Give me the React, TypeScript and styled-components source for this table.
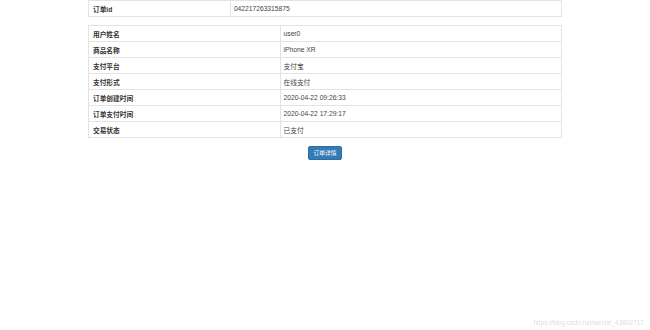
import React from 'react';
import styled, { createGlobalStyle } from 'styled-components';

const GlobalStyle = createGlobalStyle`
  html, body {
    margin: 0;
    padding: 0;
    background: #fff;
  }
  body {
    font-family: "Liberation Sans", Arial, "Noto Sans CJK SC", sans-serif;
    color: #333;
  }
`;

const Page = styled.div`
  width: 474px;
  margin: 0 auto;
  display: flex;
  flex-direction: column;
  align-items: center;
`;

const Table = styled.table<{ $gap?: number }>`
  width: 100%;
  border-collapse: collapse;
  margin-top: ${p => p.$gap ?? 0}px;
  font-size: 6.7px;
`;

const Label = styled.td<{ $width: string }>`
  width: ${p => p.$width};
  height: 15px;
  padding: 0 4px;
  border: 1px solid #e3e3e3;
  font-weight: bold;
  color: #333;
  vertical-align: middle;
`;

const Value = styled.td`
  height: 15px;
  padding: 0 3px;
  border: 1px solid #e3e3e3;
  color: #444;
  vertical-align: middle;
`;

const DetailButton = styled.button`
  margin-top: 8px;
  width: 34px;
  height: 14px;
  padding: 0;
  background: #337ab7;
  border: 1px solid #2e6da4;
  border-radius: 2px;
  color: #fff;
  font-family: inherit;
  font-size: 5.8px;
  line-height: 12px;
  cursor: pointer;
`;

const Watermark = styled.div`
  position: fixed;
  right: 6px;
  bottom: 4px;
  font-size: 6.5px;
  color: #dcdcdc;
`;

const order = [
  ['用户姓名', 'user0'],
  ['商品名称', 'iPhone XR'],
  ['支付平台', '支付宝'],
  ['支付形式', '在线支付'],
  ['订单创建时间', '2020-04-22 09:26:33'],
  ['订单支付时间', '2020-04-22 17:29:17'],
  ['交易状态', '已支付'],
];

export default function App() {
  return (
    <>
      <GlobalStyle />
      <Page>
        <Table>
          <tbody>
            <tr>
              <Label $width="30%">订单id</Label>
              <Value>042217263315875</Value>
            </tr>
          </tbody>
        </Table>
        <Table $gap={8}>
          <tbody>
            {order.map(([k, v]) => (
              <tr key={k}>
                <Label $width="40.5%">{k}</Label>
                <Value>{v}</Value>
              </tr>
            ))}
          </tbody>
        </Table>
        <DetailButton>订单详情</DetailButton>
      </Page>
      <Watermark>https://blog.csdn.net/weixin_43802717</Watermark>
    </>
  );
}
